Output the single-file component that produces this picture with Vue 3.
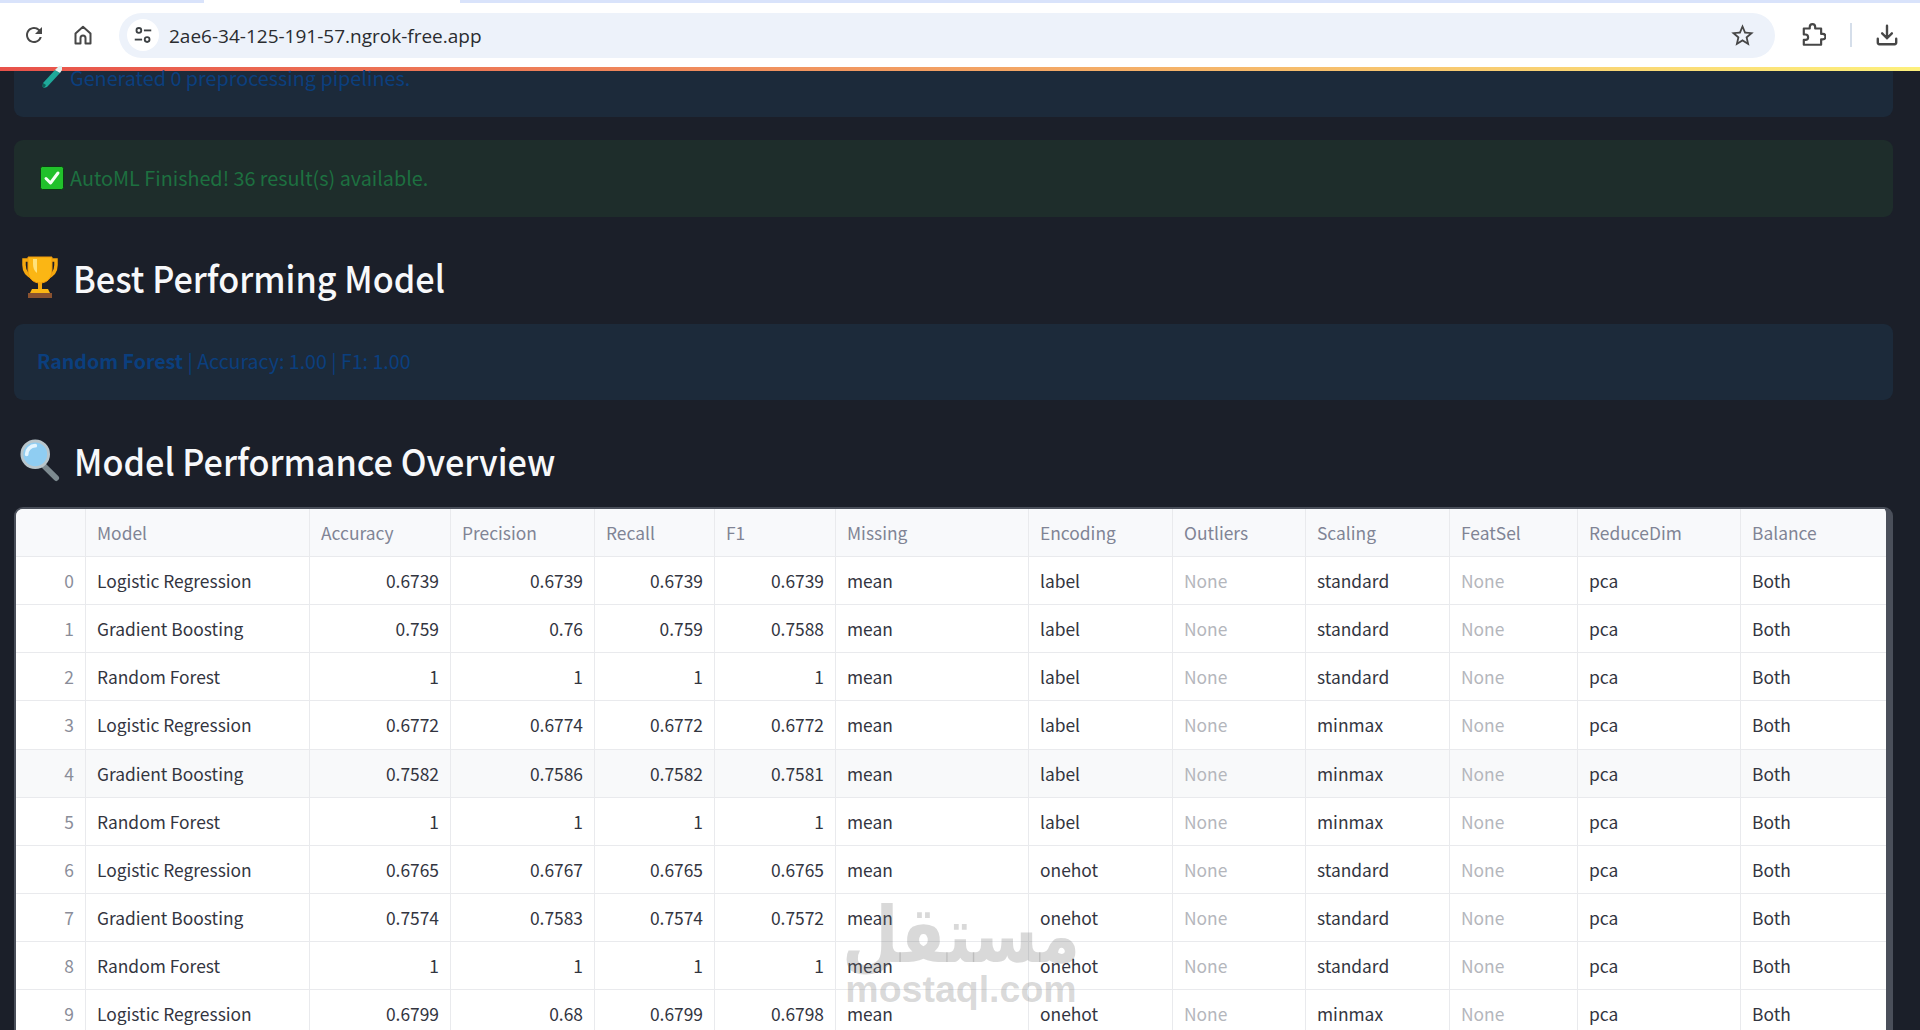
<script setup>
const cols = ['', 'Model', 'Accuracy', 'Precision', 'Recall', 'F1', 'Missing', 'Encoding', 'Outliers', 'Scaling', 'FeatSel', 'ReduceDim', 'Balance']
const LR = 'Logistic Regression'
const GB = 'Gradient Boosting'
const RF = 'Random Forest'
const rows = [
  [LR, '0.6739', '0.6739', '0.6739', '0.6739', 'label', 'standard'],
  [GB, '0.759', '0.76', '0.759', '0.7588', 'label', 'standard'],
  [RF, '1', '1', '1', '1', 'label', 'standard'],
  [LR, '0.6772', '0.6774', '0.6772', '0.6772', 'label', 'minmax'],
  [GB, '0.7582', '0.7586', '0.7582', '0.7581', 'label', 'minmax'],
  [RF, '1', '1', '1', '1', 'label', 'minmax'],
  [LR, '0.6765', '0.6767', '0.6765', '0.6765', 'onehot', 'standard'],
  [GB, '0.7574', '0.7583', '0.7574', '0.7572', 'onehot', 'standard'],
  [RF, '1', '1', '1', '1', 'onehot', 'standard'],
  [LR, '0.6799', '0.68', '0.6799', '0.6798', 'onehot', 'minmax'],
]
</script>

<template>
  <div class="page">
    <header class="chrome">
      <div class="tabstrip"><span class="tab-gap"></span></div>
      <div class="toolbar">
        <svg class="ico reload" viewBox="0 0 24 24"><path fill="#474747" d="M17.65 6.35A7.958 7.958 0 0 0 12 4c-4.42 0-7.99 3.58-7.99 8s3.57 8 7.99 8c3.73 0 6.84-2.55 7.73-6h-2.08A5.99 5.99 0 0 1 12 18c-3.31 0-6-2.69-6-6s2.69-6 6-6c1.66 0 3.14.69 4.22 1.78L13 11h7V4l-2.35 2.35z"/></svg>
        <svg class="ico home" viewBox="0 0 24 24"><path fill="none" stroke="#474747" stroke-width="2" stroke-linejoin="round" d="M4.5 10.5 12 3.8l7.5 6.7V20.5h-5V15a2.5 2.5 0 0 0-5 0v5.500h-5z"/></svg>
        <div class="omnibox">
          <span class="site-info">
            <svg viewBox="0 0 24 24" width="22" height="22"><g fill="none" stroke="#3c4043" stroke-width="2"><circle cx="7.500" cy="7" r="2.600"/><path d="M13 7h8"/><path d="M3 17h8"/><circle cx="16.500" cy="17" r="2.600"/></g></svg>
          </span>
          <span class="url">2ae6-34-125-191-57.ngrok-free.app</span>
          <svg class="star" viewBox="0 0 24 24"><path fill="#474747" d="M22 9.240l-7.190-.620L12 2 9.190 8.630 2 9.240l5.460 4.730L5.820 21 12 17.270 18.180 21l-1.630-7.030L22 9.240zM12 15.400l-3.760 2.270 1-4.280-3.320-2.880 4.380-.380L12 6.100l1.710 4.040 4.380.380-3.320 2.880 1 4.280L12 15.400z"/></svg>
        </div>
        <svg class="ico ext" viewBox="0 0 24 24"><path fill="none" stroke="#474747" stroke-width="2" stroke-linejoin="round" d="M3.500 6H9V4.500a2.500 2.500 0 0 1 5 0V6h5.500v5H21a2.500 2.500 0 0 1 0 5h-1.500v5H3.500v-4.500H5a2.500 2.500 0 0 0 0-5H3.500z"/></svg>
        <span class="divider"></span>
        <svg class="ico dl" viewBox="0 0 24 24"><path fill="none" stroke="#474747" stroke-width="2.200" stroke-linecap="round" stroke-linejoin="round" d="M12 3.500V15M7.500 10.500 12 15l4.500-4.500M3.500 15.500V19a1.500 1.500 0 0 0 1.500 1.500h14a1.500 1.500 0 0 0 1.500-1.500v-3.500"/></svg>
      </div>
      <div class="deco"></div>
    </header>

    <main class="content">
      <div class="alert info clipped">
        <svg class="emoji" viewBox="0 0 24 24">
          <path d="M4 22 2.500 20.500 3 17 15 4l5 3L7 21z" fill="#1fa99a"/>
          <path d="M15 4 19 0h3v4l-2 3z" fill="#dff3f1"/>
          <path d="M4 22 2.500 20.500 3 17 6 19z" fill="#0c5e55"/>
        </svg>
        <span>Generated 0 preprocessing pipelines.</span>
      </div>

      <div class="alert success">
        <svg class="emoji" viewBox="0 0 24 24">
          <rect x="0.500" y="0.500" width="23" height="23" rx="2" fill="#21c12b" stroke="#0d3b15"/>
          <path d="M6 12.500 10.500 17 18 7" fill="none" stroke="#f4fff4" stroke-width="3" stroke-linecap="round" stroke-linejoin="round"/>
        </svg>
        <span>AutoML Finished! 36 result(s) available.</span>
      </div>

      <h2 class="title first">
        <svg class="big-emoji" viewBox="0 0 40 44">
          <path d="M9 5H4v5c0 7 4 11 10 13M31 5h5v5c0 7-4 11-10 13" fill="none" stroke="#f5a80f" stroke-width="3.500"/>
          <path d="M8 2h24v13c0 8-5 13-12 13S8 23 8 15z" fill="#fbb614" stroke="#f29a0a"/>
          <path d="M13 4h4v14c-3-2-4-6-4-9z" fill="#ffe27a"/>
          <path d="M18 27h4v7h-4z" fill="#f5a80f"/>
          <path d="M12 34h16l2 4H10z" fill="#fbb614"/>
          <path d="M8 38h24v5H8z" fill="#8a5230"/>
        </svg>
        <span class="title-text">Best Performing Model</span>
      </h2>

      <div class="alert info best">
        <span><b>Random Forest</b> | Accuracy: 1.00 | F1: 1.00</span>
      </div>

      <h2 class="title second">
        <svg class="big-emoji lens" viewBox="0 0 42 44">
          <path d="M25 28 38 41" stroke="#7d8a90" stroke-width="6" stroke-linecap="round"/>
          <circle cx="16" cy="16" r="14" fill="#8fcdf2" stroke="#b9c6cc" stroke-width="3"/>
          <path d="M7 16a9 9 0 0 1 9-9" fill="none" stroke="#e4f5ff" stroke-width="4" stroke-linecap="round"/>
        </svg>
        <span class="title-text">Model Performance Overview</span>
      </h2>

      <div class="table-wrap">
        <div class="row head">
          <div v-for="(c, i) in cols" :key="i" class="cell">{{ c }}</div>
        </div>
        <div v-for="(r, i) in rows" :key="i" class="row" :class="{ hovered: i === 4 }">
          <div class="cell idx">{{ i }}</div>
          <div class="cell">{{ r[0] }}</div>
          <div class="cell num">{{ r[1] }}</div>
          <div class="cell num">{{ r[2] }}</div>
          <div class="cell num">{{ r[3] }}</div>
          <div class="cell num">{{ r[4] }}</div>
          <div class="cell">mean</div>
          <div class="cell">{{ r[5] }}</div>
          <div class="cell none">None</div>
          <div class="cell">{{ r[6] }}</div>
          <div class="cell none">None</div>
          <div class="cell">pca</div>
          <div class="cell">Both</div>
        </div>
      </div>
    </main>

    <div class="watermark" aria-hidden="true">
      <div class="wm-ar" dir="rtl">مستقل</div>
      <div class="wm-en">mostaql.com</div>
    </div>
  </div>
</template>

<style>
html, body { margin: 0; background: #1b1f2a; overflow: hidden; }
</style>

<style scoped>
.page {
  position: relative;
  width: 1920px;
  height: 1030px;
  overflow: hidden;
  background: #1b1f29;
  font-family: "Noto Sans CJK SC", "Noto Sans", sans-serif;
}
.chrome { background: #fff; }
.tabstrip { height: 3px; background: #d9e3fb; display: flex; padding-left: 204px; }
.tab-gap { width: 256px; background: #fff; }
.toolbar { height: 64px; display: flex; align-items: center; padding: 0 20.500px 0 22px; }
.ico { width: 24px; height: 24px; flex: none; }
.home { margin-left: 25px; }
.omnibox {
  flex: 1;
  margin-left: 24px;
  height: 45px;
  margin-top: 4px;
  margin-bottom: 4px;
  background: #edf2fa;
  border-radius: 23px;
  display: flex;
  align-items: center;
  padding: 0 19px 0 8px;
}
.site-info {
  width: 32px;
  height: 32px;
  border-radius: 50%;
  background: #fff;
  display: flex;
  align-items: center;
  justify-content: center;
}
.url {
  margin-left: 10px;
  flex: 1;
  padding-top: 2px;
  font: 19px "Open Sans", sans-serif;
  color: #2a2c30;
}
.star { width: 27px; height: 27px; }
.ext { margin-left: 24.500px; width: 26px; height: 26px; }
.divider { width: 2px; height: 24px; background: #d5deea; margin: 0 22px 0 24px; }
.dl { width: 26px; height: 26px; }
.deco { height: 4px; background: linear-gradient(90deg, #e8524a, #fdf07c); }

.content { padding: 0 27px 0 14px; }
.alert {
  display: flex;
  align-items: center;
  gap: 6px;
  border-radius: 9px;
  font-size: 19.800px;
  padding: 0 26px;
  box-sizing: border-box;
}
.alert span { position: relative; top: -1px; }
.emoji { width: 24px; height: 24px; flex: none; position: relative; top: -1px; }
.info { background: #1c2a3a; color: #0b3f7e; }
.success { background: #1e2d2b; color: #1d7040; }
.clipped { height: 46px; align-items: flex-start; border-radius: 0 0 9px 9px; }
.clipped span { line-height: 16px; }
.clipped .emoji { margin-top: -4px; }
.success { height: 77px; margin-top: 23px; }
.best { height: 76px; margin-top: 0; padding: 0 23px; font-size: 19.600px; }
.best span { top: -2px; }
.best b { font-weight: 600; }
.title {
  margin: 0;
  display: flex;
  align-items: center;
  gap: 15px;
  color: #f7f8fa;
  font-size: 37px;
  font-weight: 500;
  padding-left: 6px;
  box-sizing: border-box;
  height: 107px;
}
.title-text { display: inline-block; transform: scaleX(0.925); transform-origin: left center; white-space: nowrap; }
.first { padding-top: 12px; gap: 12.500px; }
.big-emoji { width: 40px; height: 44px; flex: none; }
.second { height: 106.500px; padding-top: 12.500px; gap: 14px; }
.table-wrap {
  background: #fff;
  border: solid #4a4f5a;
  border-width: 2px 7px 0 2px;
  border-radius: 9px 9px 0 0;
  overflow: hidden;
}
.row {
  display: grid;
  grid-template-columns: 70px 224px 141px 144px 120px 121px 193px 144px 133px 144px 128px 163px 145px;
  height: 48.150px;
  box-sizing: border-box;
  border-bottom: 1px solid #e9eaed;
  color: #33353f;
  font-size: 17.400px;
}
.head { background: #f8f9fb; color: #808495; height: 48.500px; }
.hovered { background: #f8f9fa; }
.cell {
  border-right: 1px solid #e9eaed;
  padding: 0 11px;
  display: flex;
  align-items: center;
  overflow: hidden;
  white-space: nowrap;
}
.cell:last-child { border-right: 0; }
.idx { justify-content: flex-end; color: #8a8d99; }
.num { justify-content: flex-end; }
.none { color: #b4b6bc; }

.watermark {
  position: absolute;
  left: 836px;
  top: 897px;
  width: 250px;
  color: rgba(110, 110, 110, 0.26);
  pointer-events: none;
}
.wm-ar {
  display: flex;
  justify-content: center;
  white-space: nowrap;
  font: 700 78px/72px "DejaVu Sans", sans-serif;
  padding-top: 2px;
  margin-bottom: -2px;
  transform: scaleX(0.835);
}
.wm-en { text-align: center; font: 700 37.500px/40px "Liberation Sans", sans-serif; }
</style>
